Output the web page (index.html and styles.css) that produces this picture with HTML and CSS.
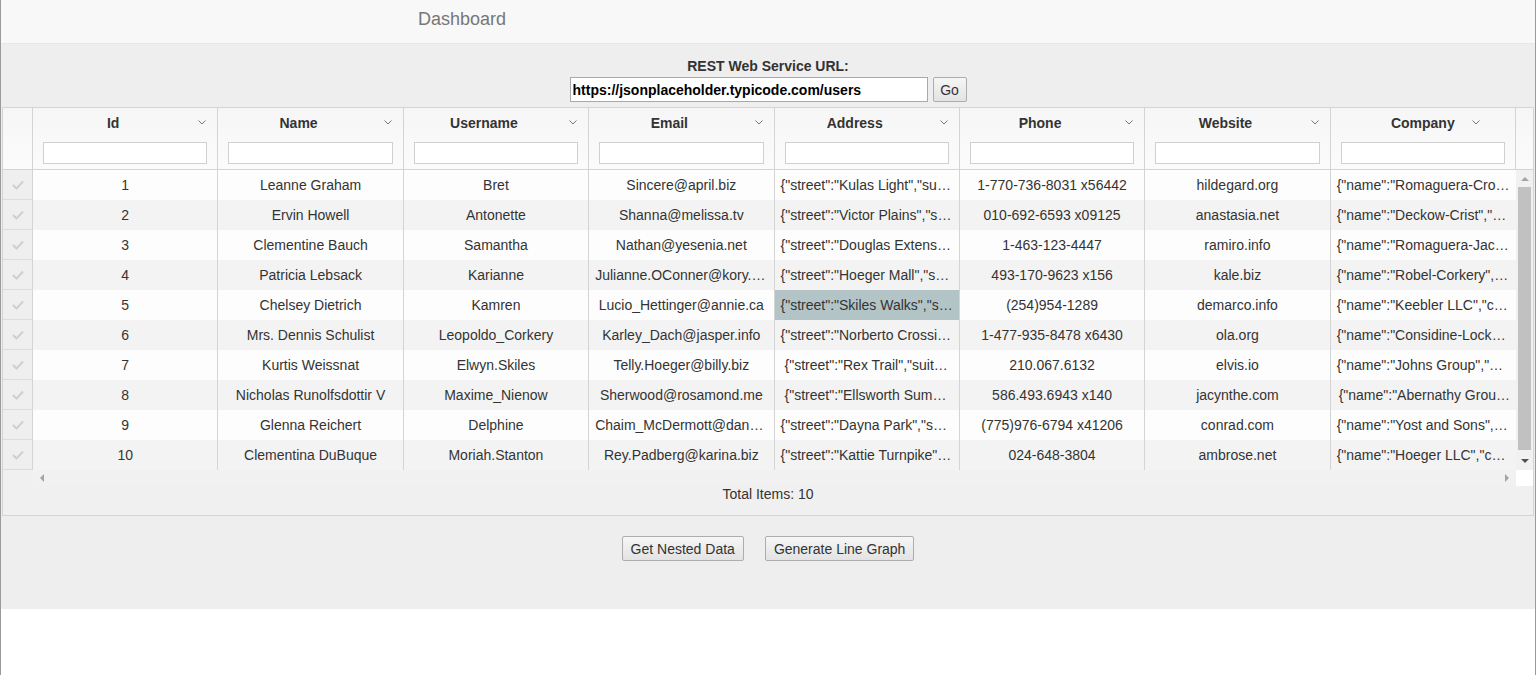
FILE: index.html
```html
<!DOCTYPE html>
<html>
<head>
<meta charset="utf-8">
<title>Dashboard</title>
<link rel="stylesheet" href="styles.css">
</head>
<body>
<div class="page">
  <header class="navbar"><span class="brand">Dashboard</span></header>
  <main class="main">
    <div class="url-label">REST Web Service URL:</div>
    <div class="url-form">
      <input class="url-input" type="text" value="https://jsonplaceholder.typicode.com/users">
      <button class="btn btn-go">Go</button>
    </div>

    <div class="grid">
      <div class="grid-header">
        <div class="hcell sel"></div>
        <div class="hcell"><div class="htitle"><span>Id</span><svg class="sort" width="8" height="5" viewBox="0 0 8 5"><polyline points="0.5,0.5 4,4 7.5,0.5" fill="none" stroke="#777" stroke-width="1"/></svg></div><input class="filter" type="text"></div>
        <div class="hcell"><div class="htitle"><span>Name</span><svg class="sort" width="8" height="5" viewBox="0 0 8 5"><polyline points="0.5,0.5 4,4 7.5,0.5" fill="none" stroke="#777" stroke-width="1"/></svg></div><input class="filter" type="text"></div>
        <div class="hcell"><div class="htitle"><span>Username</span><svg class="sort" width="8" height="5" viewBox="0 0 8 5"><polyline points="0.5,0.5 4,4 7.5,0.5" fill="none" stroke="#777" stroke-width="1"/></svg></div><input class="filter" type="text"></div>
        <div class="hcell"><div class="htitle"><span>Email</span><svg class="sort" width="8" height="5" viewBox="0 0 8 5"><polyline points="0.5,0.5 4,4 7.5,0.5" fill="none" stroke="#777" stroke-width="1"/></svg></div><input class="filter" type="text"></div>
        <div class="hcell"><div class="htitle"><span>Address</span><svg class="sort" width="8" height="5" viewBox="0 0 8 5"><polyline points="0.5,0.5 4,4 7.5,0.5" fill="none" stroke="#777" stroke-width="1"/></svg></div><input class="filter" type="text"></div>
        <div class="hcell"><div class="htitle"><span>Phone</span><svg class="sort" width="8" height="5" viewBox="0 0 8 5"><polyline points="0.5,0.5 4,4 7.5,0.5" fill="none" stroke="#777" stroke-width="1"/></svg></div><input class="filter" type="text"></div>
        <div class="hcell"><div class="htitle"><span>Website</span><svg class="sort" width="8" height="5" viewBox="0 0 8 5"><polyline points="0.5,0.5 4,4 7.5,0.5" fill="none" stroke="#777" stroke-width="1"/></svg></div><input class="filter" type="text"></div>
        <div class="hcell"><div class="htitle last"><span>Company</span><svg class="sort" width="8" height="5" viewBox="0 0 8 5"><polyline points="0.5,0.5 4,4 7.5,0.5" fill="none" stroke="#777" stroke-width="1"/></svg></div><input class="filter" type="text"></div>
        <div class="hcell corner"></div>
      </div>

      <div class="grid-body">
        <div class="rows">
          <div class="row odd"><div class="cell sel"><svg width="12" height="10" viewBox="0 0 12 10"><polyline points="1,5 4.5,8.5 11,1.5" fill="none" stroke="#cfcfcf" stroke-width="2"/></svg></div><div class="cell">1</div><div class="cell">Leanne Graham</div><div class="cell">Bret</div><div class="cell">Sincere@april.biz</div><div class="cell">{"street":"Kulas Light","suite":"Apt. 556","city":"Gwenborough"}</div><div class="cell">1-770-736-8031 x56442</div><div class="cell">hildegard.org</div><div class="cell">{"name":"Romaguera-Crona","catchPhrase":"Multi-layered"}</div></div>
          <div class="row even"><div class="cell sel"><svg width="12" height="10" viewBox="0 0 12 10"><polyline points="1,5 4.5,8.5 11,1.5" fill="none" stroke="#cfcfcf" stroke-width="2"/></svg></div><div class="cell">2</div><div class="cell">Ervin Howell</div><div class="cell">Antonette</div><div class="cell">Shanna@melissa.tv</div><div class="cell">{"street":"Victor Plains","suite":"Suite 879","city":"Wisokyburgh"}</div><div class="cell">010-692-6593 x09125</div><div class="cell">anastasia.net</div><div class="cell">{"name":"Deckow-Crist","catchPhrase":"Proactive"}</div></div>
          <div class="row odd"><div class="cell sel"><svg width="12" height="10" viewBox="0 0 12 10"><polyline points="1,5 4.5,8.5 11,1.5" fill="none" stroke="#cfcfcf" stroke-width="2"/></svg></div><div class="cell">3</div><div class="cell">Clementine Bauch</div><div class="cell">Samantha</div><div class="cell">Nathan@yesenia.net</div><div class="cell">{"street":"Douglas Extension","suite":"Suite 847"}</div><div class="cell">1-463-123-4447</div><div class="cell">ramiro.info</div><div class="cell">{"name":"Romaguera-Jacobson","catchPhrase":"Face"}</div></div>
          <div class="row even"><div class="cell sel"><svg width="12" height="10" viewBox="0 0 12 10"><polyline points="1,5 4.5,8.5 11,1.5" fill="none" stroke="#cfcfcf" stroke-width="2"/></svg></div><div class="cell">4</div><div class="cell">Patricia Lebsack</div><div class="cell">Karianne</div><div class="cell">Julianne.OConner@kory.org</div><div class="cell">{"street":"Hoeger Mall","suite":"Apt. 692","city":"South Elvis"}</div><div class="cell">493-170-9623 x156</div><div class="cell">kale.biz</div><div class="cell">{"name":"Robel-Corkery","catchPhrase":"Multi-tiered"}</div></div>
          <div class="row odd"><div class="cell sel"><svg width="12" height="10" viewBox="0 0 12 10"><polyline points="1,5 4.5,8.5 11,1.5" fill="none" stroke="#cfcfcf" stroke-width="2"/></svg></div><div class="cell">5</div><div class="cell">Chelsey Dietrich</div><div class="cell">Kamren</div><div class="cell">Lucio_Hettinger@annie.ca</div><div class="cell focus">{"street":"Skiles Walks","suite":"Suite 351","city":"Roscoeview"}</div><div class="cell">(254)954-1289</div><div class="cell">demarco.info</div><div class="cell">{"name":"Keebler LLC","catchPhrase":"User-centric"}</div></div>
          <div class="row even"><div class="cell sel"><svg width="12" height="10" viewBox="0 0 12 10"><polyline points="1,5 4.5,8.5 11,1.5" fill="none" stroke="#cfcfcf" stroke-width="2"/></svg></div><div class="cell">6</div><div class="cell">Mrs. Dennis Schulist</div><div class="cell">Leopoldo_Corkery</div><div class="cell">Karley_Dach@jasper.info</div><div class="cell">{"street":"Norberto Crossing","suite":"Apt. 950"}</div><div class="cell">1-477-935-8478 x6430</div><div class="cell">ola.org</div><div class="cell">{"name":"Considine-Lockman","catchPhrase":"Synchronised"}</div></div>
          <div class="row odd"><div class="cell sel"><svg width="12" height="10" viewBox="0 0 12 10"><polyline points="1,5 4.5,8.5 11,1.5" fill="none" stroke="#cfcfcf" stroke-width="2"/></svg></div><div class="cell">7</div><div class="cell">Kurtis Weissnat</div><div class="cell">Elwyn.Skiles</div><div class="cell">Telly.Hoeger@billy.biz</div><div class="cell indent">{"street":"Rex Trail","suite":"Suite 280","city":"Howemouth"}</div><div class="cell">210.067.6132</div><div class="cell">elvis.io</div><div class="cell">{"name":"Johns Group","catchPhrase":"Configurable"}</div></div>
          <div class="row even"><div class="cell sel"><svg width="12" height="10" viewBox="0 0 12 10"><polyline points="1,5 4.5,8.5 11,1.5" fill="none" stroke="#cfcfcf" stroke-width="2"/></svg></div><div class="cell">8</div><div class="cell">Nicholas Runolfsdottir V</div><div class="cell">Maxime_Nienow</div><div class="cell">Sherwood@rosamond.me</div><div class="cell indent">{"street":"Ellsworth Summit","suite":"Suite 729"}</div><div class="cell">586.493.6943 x140</div><div class="cell">jacynthe.com</div><div class="cell indent-s">{"name":"Abernathy Group","catchPhrase":"Implemented"}</div></div>
          <div class="row odd"><div class="cell sel"><svg width="12" height="10" viewBox="0 0 12 10"><polyline points="1,5 4.5,8.5 11,1.5" fill="none" stroke="#cfcfcf" stroke-width="2"/></svg></div><div class="cell">9</div><div class="cell">Glenna Reichert</div><div class="cell">Delphine</div><div class="cell">Chaim_McDermott@dana.io</div><div class="cell">{"street":"Dayna Park","suite":"Suite 449","city":"Bartholomebury"}</div><div class="cell">(775)976-6794 x41206</div><div class="cell">conrad.com</div><div class="cell">{"name":"Yost and Sons","catchPhrase":"Switchable"}</div></div>
          <div class="row even"><div class="cell sel"><svg width="12" height="10" viewBox="0 0 12 10"><polyline points="1,5 4.5,8.5 11,1.5" fill="none" stroke="#cfcfcf" stroke-width="2"/></svg></div><div class="cell">10</div><div class="cell">Clementina DuBuque</div><div class="cell">Moriah.Stanton</div><div class="cell">Rey.Padberg@karina.biz</div><div class="cell">{"street":"Kattie Turnpike","suite":"Suite 198","city":"Lebsackbury"}</div><div class="cell">024-648-3804</div><div class="cell">ambrose.net</div><div class="cell">{"name":"Hoeger LLC","catchPhrase":"Centralized"}</div></div>
        </div>
        <div class="vscroll">
          <div class="sb-btn"><svg width="8" height="5" viewBox="0 0 8 5"><polygon points="0,5 4,1 8,5" fill="#a3a3a3"/></svg></div>
          <div class="vtrack"><div class="vthumb"></div></div>
          <div class="sb-btn"><svg width="8" height="5" viewBox="0 0 8 5"><polygon points="0,0 8,0 4,4" fill="#505050"/></svg></div>
        </div>
      </div>

      <div class="hscroll">
        <div class="hs-spacer"></div>
        <div class="htrack">
          <svg width="5" height="8" viewBox="0 0 5 8"><polygon points="5,0 5,8 1,4" fill="#a3a3a3"/></svg>
          <svg width="5" height="8" viewBox="0 0 5 8"><polygon points="0,0 0,8 4,4" fill="#a3a3a3"/></svg>
        </div>
        <div class="hs-corner"></div>
      </div>

      <div class="grid-footer">Total Items: 10</div>
    </div>

    <div class="actions">
      <button class="btn">Get Nested Data</button>
      <button class="btn">Generate Line Graph</button>
    </div>
  </main>
</div>
</body>
</html>
```

FILE: styles.css
```css
html, body {
  margin: 0;
  padding: 0;
  background: #fff;
}

body {
  font-family: "Liberation Sans", Arial, sans-serif;
  font-size: 14px;
  color: #333;
}

.page {
  box-sizing: border-box;
  width: 1536px;
  min-height: 675px;
  border-left: 1px solid #9a9a9a;
  border-right: 1px solid #9a9a9a;
}

.navbar {
  height: 43px;
  background: #f8f8f8;
  border-bottom: 1px solid #e7e7e7;
  display: flex;
  align-items: center;
  padding-left: 417px;
}

.brand {
  font-size: 18px;
  color: #777;
  line-height: 20px;
  margin-top: -6px;
}

.main {
  background: #eeeeee;
  padding: 12px 1px 48px;
}

.url-label {
  text-align: center;
  font-weight: bold;
  line-height: 20px;
  color: #333;
}

.url-form {
  margin-top: 1px;
  display: flex;
  justify-content: center;
  gap: 5px;
}

.url-input {
  box-sizing: border-box;
  width: 358px;
  height: 25px;
  border: 1px solid #a9a9a9;
  padding: 1px 2px;
  font-family: "Liberation Sans", Arial, sans-serif;
  font-size: 14px;
  font-weight: bold;
  color: #000;
  background: #fff;
  outline: none;
}

.btn {
  box-sizing: border-box;
  height: 25px;
  padding: 0 8px;
  border: 1px solid #adadad;
  border-radius: 2px;
  background: linear-gradient(#f6f6f6, #e3e3e3);
  font-family: "Liberation Sans", Arial, sans-serif;
  font-size: 14px;
  color: #333;
}

.btn-go {
  width: 34px;
  padding: 0;
}

/* grid */
.grid {
  margin-top: 5px;
  border: 1px solid #d4d4d4;
  background: #f0f0f0;
}

.grid-header {
  display: grid;
  grid-template-columns: 30px repeat(8, 1fr) 17px;
  background: linear-gradient(#f6f6f6, #fbfbfb);
  border-bottom: 1px solid #d4d4d4;
}

.hcell {
  box-sizing: border-box;
  height: 61px;
  border-right: 1px solid #d4d4d4;
  display: flex;
  flex-direction: column;
  padding: 0 10px;
  min-width: 0;
}

.hcell.sel {
  padding: 0;
}

.hcell.corner {
  border-right: none;
  padding: 0;
}

.htitle {
  position: relative;
  height: 30px;
  line-height: 30px;
  padding-right: 24px;
  text-align: center;
  font-weight: bold;
  color: #333;
}

.htitle.last {
  padding-right: 0;
}

.sort {
  position: absolute;
  right: 1px;
  top: 12px;
}

.htitle.last .sort {
  right: 25px;
}

.filter {
  box-sizing: border-box;
  width: 100%;
  height: 22px;
  margin-top: 4px;
  border: 1px solid #d0d0d0;
  background: #fff;
  outline: none;
}

.grid-body {
  display: flex;
}

.rows {
  flex: 1;
  min-width: 0;
}

.row {
  display: grid;
  grid-template-columns: 30px repeat(8, 1fr);
  height: 30px;
}

.row.odd {
  background: #fdfdfd;
}

.row.even {
  background: #f3f3f3;
}

.cell {
  box-sizing: border-box;
  min-width: 0;
  border-right: 1px solid #d4d4d4;
  padding: 5px 6px;
  line-height: 20px;
  text-align: center;
  white-space: nowrap;
  overflow: hidden;
  text-overflow: ellipsis;
  color: #333;
}

.cell.sel {
  background: #efefef;
  border-bottom: 1px solid #dcdcdc;
  display: flex;
  align-items: center;
  justify-content: center;
  padding: 0;
}

.cell.focus {
  background: #b3c4c7;
}

.cell.indent {
  padding-left: 10px;
}

.cell.indent-s {
  padding-left: 8px;
}

.row .cell:last-child {
  border-right: none;
}

.vscroll {
  width: 17px;
  background: #f1f1f1;
  display: flex;
  flex-direction: column;
}

.sb-btn {
  height: 17px;
  display: flex;
  align-items: center;
  justify-content: center;
}

.vtrack {
  flex: 1;
  padding: 0 2px;
  display: flex;
  flex-direction: column;
}

.vthumb {
  flex: 1;
  margin-bottom: 3px;
  background: #c1c1c1;
}

.hscroll {
  display: flex;
  height: 16px;
}

.hs-spacer {
  width: 30px;
  background: #f0f0f0;
}

.htrack {
  flex: 1;
  background: #f1f1f1;
  display: flex;
  justify-content: space-between;
  align-items: center;
  padding: 0 6px;
}

.hs-corner {
  width: 17px;
  background: #fff;
}

.grid-footer {
  height: 29px;
  line-height: 17px;
  text-align: center;
  color: #333;
  background: #f0f0f0;
}

.actions {
  margin-top: 20px;
  display: flex;
  justify-content: center;
  gap: 21px;
}
```
